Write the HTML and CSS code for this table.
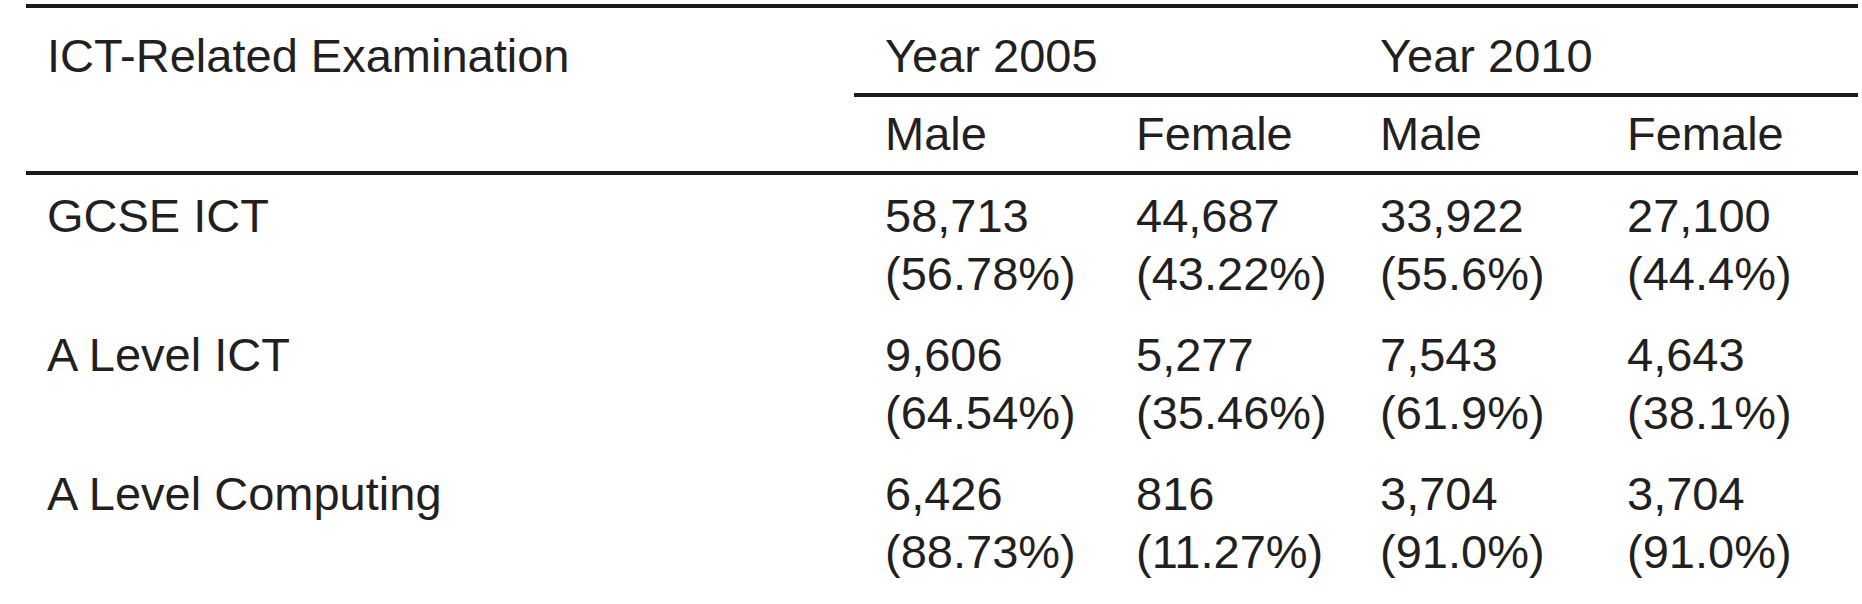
FILE: index.html
```html
<!DOCTYPE html>
<html lang="en">
<head>
<meta charset="utf-8">
<title>ICT-Related Examinations</title>
<link rel="stylesheet" href="styles.css">
</head>
<body>
<table class="exam-table">
  <colgroup>
    <col class="c-name">
    <col class="c-val">
    <col class="c-val2">
    <col class="c-val3">
    <col class="c-val4">
  </colgroup>
  <thead>
    <tr>
      <th rowspan="2" class="head-name">ICT-Related Examination</th>
      <th colspan="2" class="head-year">Year 2005</th>
      <th colspan="2" class="head-year">Year 2010</th>
    </tr>
    <tr>
      <th class="head-sex">Male</th>
      <th class="head-sex">Female</th>
      <th class="head-sex">Male</th>
      <th class="head-sex">Female</th>
    </tr>
  </thead>
  <tbody>
    <tr>
      <td class="name">GCSE ICT</td>
      <td>58,713<br>(56.78%)</td>
      <td>44,687<br>(43.22%)</td>
      <td>33,922<br>(55.6%)</td>
      <td>27,100<br>(44.4%)</td>
    </tr>
    <tr>
      <td class="name">A Level ICT</td>
      <td>9,606<br>(64.54%)</td>
      <td>5,277<br>(35.46%)</td>
      <td>7,543<br>(61.9%)</td>
      <td>4,643<br>(38.1%)</td>
    </tr>
    <tr>
      <td class="name">A Level Computing</td>
      <td>6,426<br>(88.73%)</td>
      <td>816<br>(11.27%)</td>
      <td>3,704<br>(91.0%)</td>
      <td>3,704<br>(91.0%)</td>
    </tr>
  </tbody>
</table>
</body>
</html>
```

FILE: styles.css
```css
html, body {
  margin: 0;
  padding: 0;
  background: #ffffff;
}

body {
  font-family: "Liberation Sans", Arial, sans-serif;
  font-size: 47px;
  color: #231f20;
}

.exam-table {
  margin: 4px 0 0 26px;
  width: 1832px;
  table-layout: fixed;
  border-collapse: separate;
  border-spacing: 0;
  border-top: 4px solid #1a1a1a;
}

.c-name { width: 828px; }
.c-val { width: 251px; }
.c-val2 { width: 244px; }
.c-val3 { width: 247px; }
.c-val4 { width: 262px; }

.exam-table th,
.exam-table td {
  font-weight: normal;
  text-align: left;
  vertical-align: top;
  line-height: 58px;
  padding: 0 0 0 31px;
  white-space: nowrap;
}

.exam-table .head-name {
  padding-left: 21px;
  padding-top: 19px;
  border-bottom: 4px solid #1a1a1a;
}

.exam-table .head-year {
  padding-top: 19px;
  padding-bottom: 8px;
  border-bottom: 4px solid #1a1a1a;
}

.exam-table .head-sex {
  padding-top: 8px;
  padding-bottom: 8px;
  border-bottom: 4px solid #1a1a1a;
}

.exam-table td {
  padding-top: 12px;
  padding-bottom: 11px;
}

.exam-table td.name {
  padding-left: 21px;
}
```
